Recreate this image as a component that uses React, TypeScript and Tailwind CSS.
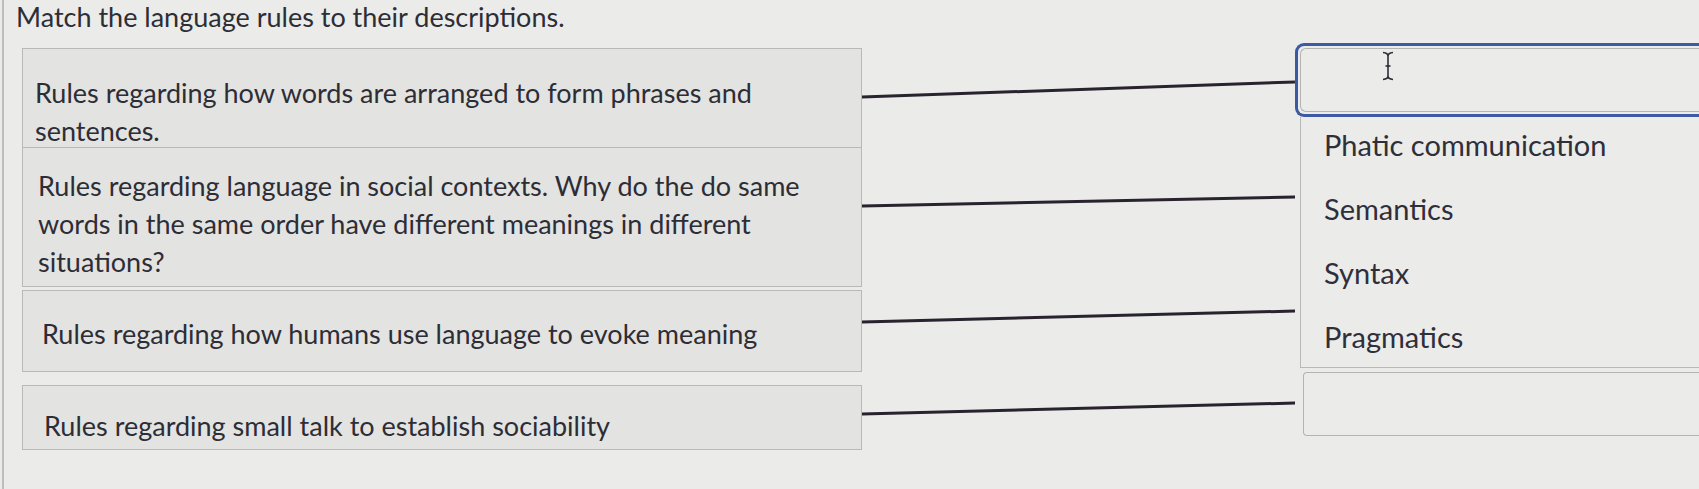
import React from "react";

const boxText = "text-[27px] leading-[38px] text-[#2d2d36]";

export default function App() {
  return (
    <div className="w-[1699px] h-[489px] overflow-hidden bg-[#ebebe9] font-['Lato',_'Open_Sans',_sans-serif]">
      <div className="ml-[2px] h-full border-l-2 border-[#bdbdbb] pl-[12px]">
        <h1 className="text-[27px] leading-[33px] font-normal text-[#2d2d36]">
          Match the language rules to their descriptions.
        </h1>
        <div className="mt-[10px] flex items-start">
          {/* Left column: descriptions */}
          <div className="ml-[6px] w-[840px] shrink-0 flex flex-col pt-[5px]">
            <div className={`h-[100px] border border-[#b9b9b7] bg-[#e3e3e1] pl-[12px] pt-[25px] ${boxText}`}>
              <p>
                Rules regarding how words are arranged to form phrases and
                <br />
                sentences.
              </p>
            </div>
            <div className={`h-[139px] border border-t-0 border-[#b9b9b7] bg-[#e3e3e1] pl-[15px] pt-[19px] ${boxText}`}>
              <p>
                Rules regarding language in social contexts. Why do the do same
                <br />
                words in the same order have different meanings in different
                <br />
                situations?
              </p>
            </div>
            <div className={`mt-[3px] h-[82px] border border-[#b9b9b7] bg-[#e3e3e1] pl-[19px] pt-[24px] ${boxText}`}>
              <p>Rules regarding how humans use language to evoke meaning</p>
            </div>
            <div className={`mt-[13px] h-[65px] border border-[#b9b9b7] bg-[#e3e3e1] pl-[21px] pt-[21px] ${boxText}`}>
              <p>Rules regarding small talk to establish sociability</p>
            </div>
          </div>

          {/* Connector lines */}
          <svg width="433" height="420" className="shrink-0" viewBox="0 0 433 420">
            <g stroke="#28232e" strokeWidth="3" strokeLinecap="butt">
              <line x1="0" y1="54" x2="433" y2="39" />
              <line x1="0" y1="163" x2="433" y2="154" />
              <line x1="0" y1="279" x2="433" y2="268" />
              <line x1="0" y1="371" x2="433" y2="360" />
            </g>
          </svg>

          {/* Right column: answer targets */}
          <div className="flex-1 flex flex-col min-w-0">
            <div className="h-[74px] w-[420px] rounded-l-[9px] border-[3px] border-r-0 border-[#3b5aa3] p-[2px] pr-0">
              <div className="h-full rounded-l-[6px] border border-r-0 border-[#b3b3b1] bg-[#ebebe9] pl-[80px] pt-[2px]">
                <svg width="14" height="30" viewBox="0 0 14 30">
                  <g stroke="#2d2d36" strokeWidth="1.6" fill="none">
                    <path d="M2 1.5 Q7 2 7 5 Q7 2 12 1.5" />
                    <line x1="7" y1="5" x2="7" y2="25" />
                    <line x1="4.5" y1="15" x2="9.5" y2="15" />
                    <path d="M2 28.5 Q7 28 7 25 Q7 28 12 28.5" />
                  </g>
                </svg>
              </div>
            </div>
            <div className="ml-[5px] w-[420px] h-[251px] border-l border-b border-[#b9b9b7] bg-[#ebebe9] pl-[23px] text-[29px] text-[#2f2f3a]">
              <div className="-mt-[4px]">
                <div className="h-[64px] flex items-center">Phatic communication</div>
                <div className="h-[64px] flex items-center">Semantics</div>
                <div className="h-[64px] flex items-center">Syntax</div>
                <div className="h-[64px] flex items-center">Pragmatics</div>
              </div>
            </div>
            <div className="mt-[4px] ml-[8px] w-[420px] h-[64px] rounded-l-[4px] border border-r-0 border-[#b3b3b1] bg-[#ebebe9]" />
          </div>
        </div>
      </div>
    </div>
  );
}
